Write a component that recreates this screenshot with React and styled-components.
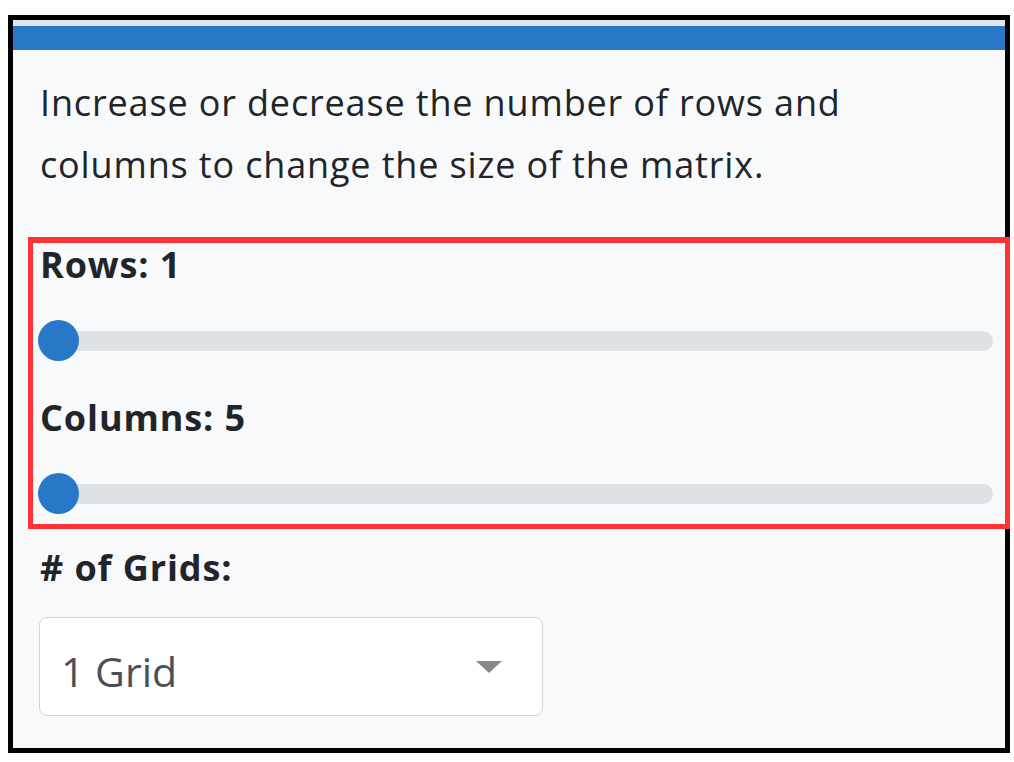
import React, { useState } from "react";
import styled, { createGlobalStyle } from "styled-components";

const GlobalStyle = createGlobalStyle`
  body {
    margin: 0;
    background: #ffffff;
    font-family: "Open Sans", "Noto Sans", sans-serif;
  }
`;

const Frame = styled.div`
  box-sizing: border-box;
  margin: 15px 0 0 8px;
  width: 1002px;
  height: 738px;
  border: 5px solid #000;
  background: #f8f9fa;
`;

const TopBar = styled.div`
  height: 24px;
  border-top: 6px solid #dfe5ec;
  background: #2878c8;
`;

const Content = styled.div`
  padding: 22px 12px 0 27px;
`;

const Intro = styled.p`
  margin: 0;
  max-width: 900px;
  font-size: 36px;
  letter-spacing: 0.85px;
  line-height: 62px;
  color: #212529;
`;

const Highlight = styled.div`
  margin: 41px -17px 0 -12px;
  padding: 0 12px 10px 7px;
  border: 5px solid #ff3333;
  border-top-width: 6px;
  position: relative;
`;

const Label = styled.div`
  padding-top: 2px;
  font-size: 36px;
  letter-spacing: 0.9px;
  line-height: 40px;
  font-weight: 700;
  color: #212529;
  margin-top: ${({ $gap }) => $gap || 0}px;
`;

const Range = styled.input`
  display: block;
  -webkit-appearance: none;
  appearance: none;
  width: calc(100% + 2px);
  height: 41px;
  margin: 35px 0 0 -2px;
  background: transparent;

  &::-webkit-slider-runnable-track {
    height: 20px;
    border-radius: 10px;
    background: #dee2e6;
  }
  &::-webkit-slider-thumb {
    -webkit-appearance: none;
    width: 41px;
    height: 41px;
    margin-top: -10.5px;
    border-radius: 50%;
    background: #2878c8;
    border: none;
  }
`;

const Select = styled.div`
  box-sizing: border-box;
  display: flex;
  align-items: center;
  justify-content: space-between;
  width: 504px;
  height: 99px;
  margin: 29px 0 0 -1px;
  padding: 8px 40px 0 21px;
  background: #fff;
  border: 1px solid #ced4da;
  border-radius: 8px;
  font-size: 41px;
  color: #495057;
`;

const Caret = () => (
  <svg width="26" height="12" viewBox="0 0 26 12" style={{ marginTop: -8 }}>
    <path d="M0 0 L26 0 L13 12 Z" fill="#888" />
  </svg>
);

export default function App() {
  const [rows, setRows] = useState(1);
  const [cols, setCols] = useState(5);

  return (
    <>
      <GlobalStyle />
      <Frame>
        <TopBar />
        <Content>
          <Intro>
            Increase or decrease the number of rows and columns to change the
            size of the matrix.
          </Intro>
          <Highlight>
            <Label>Rows: {rows}</Label>
            <Range
              type="range"
              min={1}
              max={10}
              value={rows}
              onChange={(e) => setRows(+e.target.value)}
            />
            <Label $gap={35}>Columns: {cols}</Label>
            <Range
              type="range"
              min={5}
              max={10}
              value={cols}
              onChange={(e) => setCols(+e.target.value)}
            />
          </Highlight>
          <Label $gap={17}># of Grids:</Label>
          <Select>
            <span>1 Grid</span>
            <Caret />
          </Select>
        </Content>
      </Frame>
    </>
  );
}
